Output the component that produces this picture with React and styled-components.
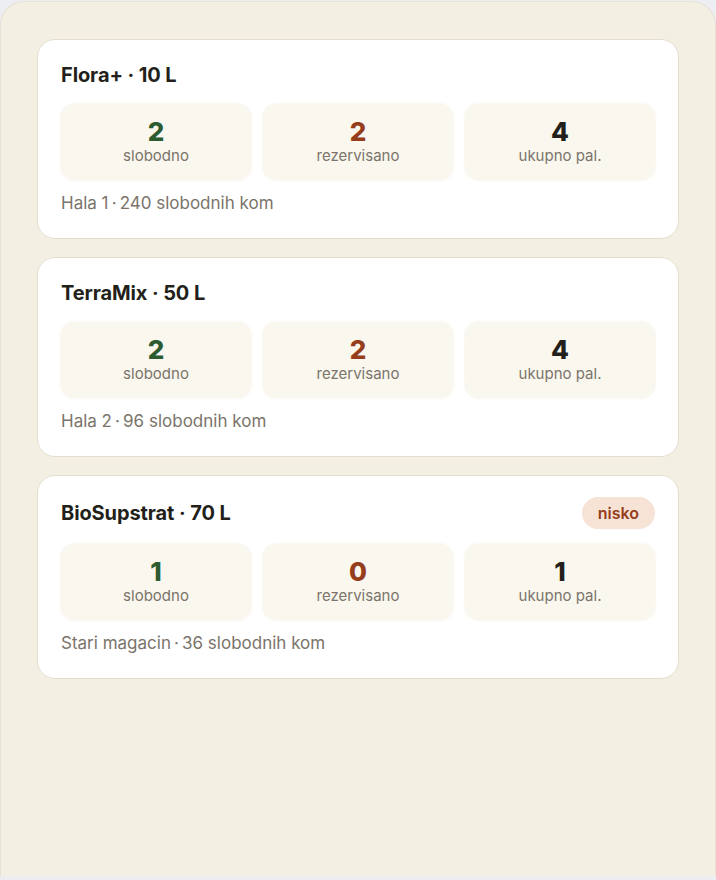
import React from 'react';
import styled, { createGlobalStyle } from 'styled-components';

const GlobalStyle = createGlobalStyle`
  html, body {
    margin: 0;
    padding: 0;
    background: #eceef1;
    font-family: Inter, "Noto Sans", sans-serif;
  }
`;

const items = [
  { name: 'Flora+ · 10 L', free: 2, reserved: 2, total: 4, place: 'Hala 1', pieces: 240 },
  { name: 'TerraMix · 50 L', free: 2, reserved: 2, total: 4, place: 'Hala 2', pieces: 96 },
  { name: 'BioSupstrat · 70 L', free: 1, reserved: 0, total: 1, place: 'Stari magacin', pieces: 36, low: true },
];

function App() {
  return (
    <>
      <GlobalStyle />
      <Panel>
        <List>
          {items.map(item => (
            <Card key={item.name}>
              <Header>
                <Title>{item.name}</Title>
                {item.low && <Badge>nisko</Badge>}
              </Header>
              <Stats>
                <Stat>
                  <Value tone="green">{item.free}</Value>
                  <Label>slobodno</Label>
                </Stat>
                <Stat>
                  <Value tone="rust">{item.reserved}</Value>
                  <Label>rezervisano</Label>
                </Stat>
                <Stat>
                  <Value>{item.total}</Value>
                  <Label>ukupno pal.</Label>
                </Stat>
              </Stats>
              <Footer>{item.place}{'\u2009·\u2009'}{item.pieces} slobodnih kom</Footer>
            </Card>
          ))}
        </List>
      </Panel>
    </>
  );
}

export default App;

const tones = {
  green: '#2c5a31',
  rust: '#963d1b',
};

const Panel = styled.div`
  margin-top: 1px;
  height: 875px;
  box-sizing: border-box;
  background: #f4efe3;
  border: 1px solid #e6e2d8;
  border-bottom: none;
  border-radius: 24px 24px 0 0;
  padding: 37px 36px;
`;

const List = styled.div`
  display: flex;
  flex-direction: column;
  gap: 18px;
`;

const Card = styled.div`
  background: #ffffff;
  border: 1.5px solid #e4dfcd;
  border-radius: 18px;
  padding: 20px 23px 23px;
`;

const Header = styled.div`
  display: flex;
  align-items: center;
  justify-content: space-between;
  min-height: 30px;
`;

const Title = styled.h3`
  margin: 0;
  font-size: 20px;
  font-weight: 700;
  letter-spacing: -0.1px;
  color: #231f1a;
`;

const Badge = styled.span`
  background: #f7e2d6;
  color: #963d1b;
  font-size: 16px;
  font-weight: 600;
  line-height: 32px;
  margin: 1px 0;
  padding: 0 16px;
  border-radius: 16px;
`;

const Stats = styled.div`
  display: grid;
  grid-template-columns: repeat(3, 1fr);
  gap: 12px;
  margin-top: 14px;
`;

const Stat = styled.div`
  background: #faf7ef;
  border-radius: 14px;
  height: 76px;
  display: flex;
  flex-direction: column;
  align-items: center;
  justify-content: center;
  box-shadow: 0 0 3px rgba(240, 234, 218, 0.8);
`;

const Value = styled.div`
  font-size: 26px;
  font-weight: 800;
  line-height: 28px;
  color: ${p => tones[p.tone] || '#231f1a'};
`;

const Label = styled.div`
  font-size: 15px;
  line-height: 20px;
  color: #7a746a;
`;

const Footer = styled.div`
  margin-top: 11px;
  font-size: 17px;
  line-height: 24px;
  color: #7a746a;
`;
